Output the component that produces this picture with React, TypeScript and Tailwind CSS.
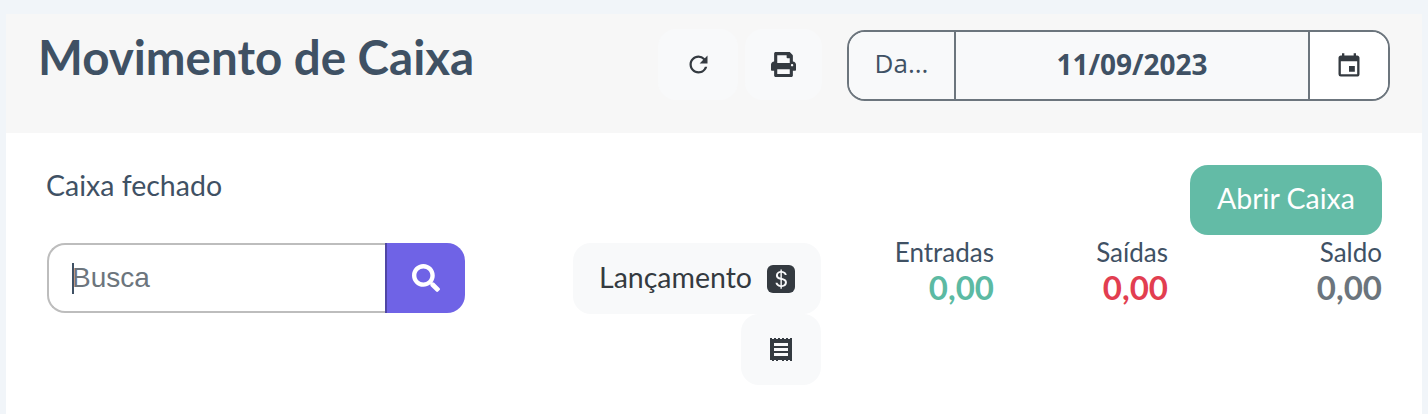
import { BsCurrencyDollar } from "react-icons/bs"
import { FaPrint, FaSearch } from "react-icons/fa"
import { MdEvent, MdRefresh } from "react-icons/md"

const Stat = ({ label, value, color, width }: { label: string; value: string; color: string; width: string }) => (
  <div className={`flex flex-col items-end ${width}`}>
    <span className="text-[26px] leading-[28px] text-[#3f5164]">{label}</span>
    <span className={`mt-[2px] text-[33px] leading-[38px] font-bold ${color}`}>{value}</span>
  </div>
)

export default function App() {
  return (
    <div className="h-[414px] w-[1428px] overflow-hidden bg-[#f1f5f9] px-[6px] pt-[14px] font-['Lato','Open_Sans',sans-serif]">
      <div className="flex h-[119px] items-start bg-[#f7f7f7] pl-[32px] pr-[32px]">
        <h1 className="mt-[15px] flex-1 text-[47.5px] leading-[56px] font-bold text-[#3f5164]">Movimento de Caixa</h1>
        <div className="mt-[15px] flex gap-[7px]">
          <button className="flex h-[71px] w-[80px] items-center justify-center rounded-[18px] bg-[#f8f9fa] text-[#343a40]">
            <MdRefresh className="h-[27px] w-[27px]" />
          </button>
          <button className="flex h-[71px] w-[77px] items-center justify-center rounded-[18px] bg-[#f8f9fa] text-[#343a40]">
            <FaPrint className="h-[25px] w-[25px]" />
          </button>
        </div>
        <div className="mt-[16px] ml-[25px] flex h-[71px] w-[543px] overflow-hidden rounded-[18px] border-2 border-[#6c757d]">
          <div className="flex w-[107px] items-center justify-center border-r-2 border-[#6c757d] bg-[#f8f9fa] pb-[4px] text-[26px] text-[#3f5164] font-['Open_Sans',sans-serif]">
            Da...
          </div>
          <div className="flex flex-1 items-center justify-center bg-[#f8f9fa] pb-[4px] text-[28px] font-bold text-[#3f5164] font-['Open_Sans',sans-serif]">
            11/09/2023
          </div>
          <div className="flex w-[80px] items-center justify-center border-l-2 border-[#6c757d] bg-white text-[#343a40]">
            <MdEvent className="h-[28px] w-[28px]" />
          </div>
        </div>
      </div>
      <div className="flex h-[281px] bg-white pl-[41px] pr-[40px]">
        <div className="w-[418px] shrink-0">
          <p className="mt-[35px] -ml-[1px] text-[28.5px] leading-[34px] text-[#3f5164]">Caixa fechado</p>
          <div className="mt-[41px] flex h-[70px]">
            <div className="flex flex-1 items-center rounded-l-[18px] border-2 border-r-0 border-[#bdbdbd] bg-white pl-[23px] font-['Liberation_Sans',sans-serif] text-[28px] text-[#6c757d]">
              <span className="h-[31px] w-[2px] shrink-0 bg-[#3f5164]" />
              <span className="-ml-[2px]">Busca</span>
            </div>
            <button className="flex w-[80px] items-center justify-center rounded-r-[18px] border-l-2 border-[#4f46a5] bg-[#6f63e6] text-white">
              <FaSearch className="h-[28px] w-[28px]" />
            </button>
          </div>
        </div>
        <div className="ml-[108px] mt-[110px] flex w-[248px] shrink-0 flex-col items-end">
          <button className="flex h-[71px] w-full items-center justify-center gap-[15px] rounded-[18px] bg-[#f8f9fa] text-[28.5px] text-[#343a40]">
            <span className="-mt-[2px]">Lançamento</span>
            <span className="flex h-[28px] w-[28px] items-center justify-center rounded-[6px] bg-[#343a40] text-[#f8f9fa]">
              <BsCurrencyDollar className="h-[22px] w-[22px]" />
            </span>
          </button>
          <button className="flex h-[71px] w-[80px] items-center justify-center rounded-[18px] bg-[#f8f9fa]">
            <svg viewBox="0 0 22 23" className="h-[23px] w-[22px]" fill="#343a40">
              <path fillRule="evenodd" d="M0 0h2v1h2V0h2v1h2V0h2v1h2V0h2v1h2V0h2v1h2V0h2v23h-2v-1h-2v1h-2v-1h-2v1h-2v-1H8v1H6v-1H4v1H2v-1H0V0Zm4 5v3h14V5H4Zm0 5v3h14v-3H4Zm0 5v3h14v-3H4Z" />
            </svg>
          </button>
        </div>
        <div className="flex flex-1 flex-col items-end pt-[32px]">
          <button className="flex h-[70px] w-[192px] items-center justify-center rounded-[18px] bg-[#63bba6] pb-[3px] text-[28.5px] text-white">
            Abrir Caixa
          </button>
          <div className="mt-[3px] flex w-full justify-end">
            <Stat label="Entradas" value="0,00" color="text-[#5cbaa3]" width="w-[100px]" />
            <Stat label="Saídas" value="0,00" color="text-[#e23e50]" width="w-[174px]" />
            <Stat label="Saldo" value="0,00" color="text-[#6c757d]" width="w-[214px]" />
          </div>
        </div>
      </div>
    </div>
  )
}
